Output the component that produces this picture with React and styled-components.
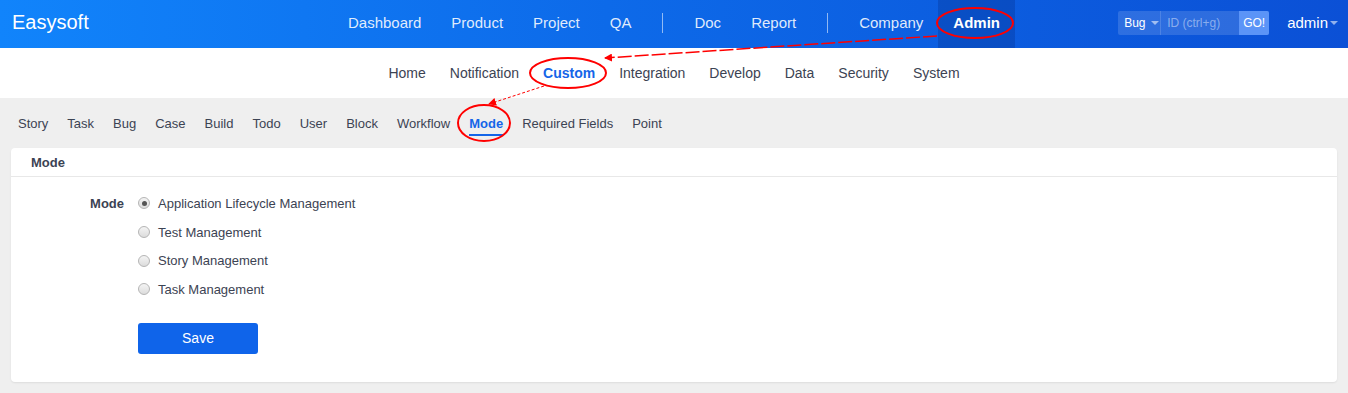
import styled, { createGlobalStyle } from 'styled-components';

const GlobalStyle = createGlobalStyle`
  html, body {
    margin: 0;
    padding: 0;
    background: #efefef;
    font-family: "Liberation Sans", Arial, sans-serif;
    color: #3c4353;
  }
  * { box-sizing: border-box; }
`;

const Page = styled.div`
  position: relative;
  width: 1348px;
  height: 393px;
  overflow: hidden;
  background: #efefef;
`;

const Header = styled.header`
  display: grid;
  grid-template-columns: 1fr auto 1fr;
  align-items: stretch;
  height: 48px;
  background: linear-gradient(90deg, #1184fb 0%, #0d6ae9 45%, #0b50d6 100%);
  color: #fff;
`;

const Logo = styled.div`
  display: flex;
  align-items: center;
  padding: 0 0 3px 12px;
  font-size: 20px;
  color: #fff;
`;

const MainNav = styled.nav`
  display: flex;
  align-items: stretch;
`;

const MainLink = styled.a`
  display: flex;
  align-items: center;
  padding: 0 15px 3px;
  font-size: 15px;
  color: ${p => (p.active ? '#fff' : 'rgba(255,255,255,0.88)')};
  font-weight: ${p => (p.active ? 'bold' : 'normal')};
  background: ${p => (p.active ? 'rgba(0,20,90,0.2)' : 'transparent')};
`;

const Divider = styled.span`
  align-self: center;
  width: 1px;
  height: 20px;
  margin: 0 16px 3px;
  background: rgba(255,255,255,0.55);
`;

const RightTools = styled.div`
  display: flex;
  align-items: center;
  justify-content: flex-end;
  padding: 0 10px 3px 0;
`;

const SearchBox = styled.div`
  display: flex;
  align-items: stretch;
  height: 24px;
  background: rgba(255,255,255,0.14);
  border-radius: 2px;
  margin-right: 18px;
`;

const SearchType = styled.div`
  display: flex;
  align-items: center;
  gap: 5px;
  width: 43px;
  padding-left: 6px;
  font-size: 12px;
  color: #fff;
  border-right: 1px solid rgba(255,255,255,0.15);
`;

const Caret = styled.span`
  display: inline-block;
  width: 0;
  height: 0;
  border-left: 4px solid transparent;
  border-right: 4px solid transparent;
  border-top: 4px solid rgba(255,255,255,0.55);
`;

const SearchInput = styled.div`
  display: flex;
  align-items: center;
  width: 78px;
  padding-left: 6px;
  font-size: 12px;
  color: rgba(255,255,255,0.45);
`;

const GoButton = styled.div`
  display: flex;
  align-items: center;
  justify-content: center;
  width: 30px;
  font-size: 12px;
  color: #fff;
  background: #5b94f7;
  border-radius: 0 2px 2px 0;
`;

const UserMenu = styled.div`
  display: flex;
  align-items: center;
  gap: 2px;
  font-size: 15px;
  color: #fff;
`;

const SubNav = styled.nav`
  display: flex;
  justify-content: center;
  align-items: center;
  height: 50px;
  background: #fff;
`;

const SubLink = styled.a`
  padding: 0 12px;
  font-size: 14px;
  color: ${p => (p.active ? '#1565e8' : '#3c4353')};
  font-weight: ${p => (p.active ? 'bold' : 'normal')};
`;

const TabBar = styled.div`
  display: flex;
  align-items: stretch;
  height: 50px;
  padding-left: 8.5px;
`;

const Tab = styled.a`
  position: relative;
  display: flex;
  align-items: center;
  padding: 0 9.5px;
  font-size: 13px;
  color: ${p => (p.active ? '#1565e8' : '#3c4353')};
  font-weight: ${p => (p.active ? 'bold' : 'normal')};
  &::after {
    content: '';
    display: ${p => (p.active ? 'block' : 'none')};
    position: absolute;
    left: 9.5px;
    right: 9.5px;
    bottom: 12px;
    height: 2px;
    background: #1565e8;
  }
`;

const Panel = styled.section`
  margin: 0 11px;
  background: #fff;
  border-radius: 4px;
  box-shadow: 0 1px 2px rgba(0,0,0,0.08);
`;

const PanelHeader = styled.div`
  display: flex;
  align-items: center;
  height: 29px;
  padding-left: 20px;
  font-size: 13px;
  font-weight: bold;
  border-bottom: 1px solid #e8e8e8;
`;

const PanelBody = styled.div`
  display: grid;
  grid-template-columns: 113px auto;
  column-gap: 14px;
  padding: 12px 0 28px;
`;

const FieldLabel = styled.div`
  height: 28.7px;
  display: flex;
  align-items: center;
  justify-content: flex-end;
  font-size: 13px;
  font-weight: bold;
`;

const Options = styled.div`
  display: flex;
  flex-direction: column;
`;

const Option = styled.label`
  display: flex;
  align-items: center;
  gap: 8px;
  height: 28.7px;
  font-size: 13px;
  color: #3c4353;
`;

const Radio = styled.span`
  position: relative;
  width: 12px;
  height: 12px;
  border-radius: 50%;
  border: 1px solid #b5b5b5;
  background: linear-gradient(180deg, #f4f4f4, #dcdcdc);
  &::after {
    content: '';
    display: ${p => (p.checked ? 'block' : 'none')};
    position: absolute;
    left: 2.5px;
    top: 2.5px;
    width: 5px;
    height: 5px;
    border-radius: 50%;
    background: #555;
  }
`;

const SaveButton = styled.button`
  margin-top: 19px;
  width: 120px;
  height: 31px;
  border: none;
  border-radius: 3px;
  background: #0f64ea;
  color: #fff;
  font-family: inherit;
  font-size: 14px;
`;

const Annotations = styled.svg`
  position: absolute;
  left: 0;
  top: 0;
  pointer-events: none;
`;

const mainNav = [
  ['Dashboard'], ['Product'], ['Project'], ['QA'], null,
  ['Doc'], ['Report'], null, ['Company'], ['Admin', true],
];
const subNav = ['Home', 'Notification', 'Custom', 'Integration', 'Develop', 'Data', 'Security', 'System'];
const tabs = ['Story', 'Task', 'Bug', 'Case', 'Build', 'Todo', 'User', 'Block', 'Workflow', 'Mode', 'Required Fields', 'Point'];
const modes = ['Application Lifecycle Management', 'Test Management', 'Story Management', 'Task Management'];

const App = () => (
  <Page>
    <GlobalStyle />
    <Header>
      <Logo>Easysoft</Logo>
      <MainNav>
        {mainNav.map((item, i) =>
          item ? (
            <MainLink key={i} active={item[1]}>{item[0]}</MainLink>
          ) : (
            <Divider key={i} />
          )
        )}
      </MainNav>
      <RightTools>
        <SearchBox>
          <SearchType>Bug <Caret /></SearchType>
          <SearchInput>ID (ctrl+g)</SearchInput>
          <GoButton>GO!</GoButton>
        </SearchBox>
        <UserMenu>admin <Caret /></UserMenu>
      </RightTools>
    </Header>
    <SubNav>
      {subNav.map(s => (
        <SubLink key={s} active={s === 'Custom'}>{s}</SubLink>
      ))}
    </SubNav>
    <TabBar>
      {tabs.map(t => (
        <Tab key={t} active={t === 'Mode'}>{t}</Tab>
      ))}
    </TabBar>
    <Panel>
      <PanelHeader>Mode</PanelHeader>
      <PanelBody>
        <FieldLabel>Mode</FieldLabel>
        <Options>
          {modes.map((m, i) => (
            <Option key={m}>
              <Radio checked={i === 0} />
              {m}
            </Option>
          ))}
          <SaveButton>Save</SaveButton>
        </Options>
      </PanelBody>
    </Panel>
    <Annotations width="1348" height="393" viewBox="0 0 1348 393">
      <defs>
        <marker id="arr" markerWidth="8" markerHeight="8" refX="7" refY="4" orient="auto" markerUnits="userSpaceOnUse">
          <path d="M0,0 L8,4 L0,8 z" fill="#f00" />
        </marker>
      </defs>
      <ellipse cx="975" cy="23" rx="38" ry="15" fill="none" stroke="#f00" strokeWidth="2" />
      <ellipse cx="568" cy="73" rx="38" ry="15" fill="none" stroke="#f00" strokeWidth="2" />
      <ellipse cx="484" cy="123" rx="26" ry="18" fill="none" stroke="#f00" strokeWidth="2" />
      <line x1="937" y1="36" x2="605" y2="58" stroke="#f00" strokeWidth="1.5" strokeDasharray="14 3" markerEnd="url(#arr)" />
      <line x1="544" y1="86" x2="489" y2="104" stroke="#f00" strokeWidth="1" strokeDasharray="3 2" markerEnd="url(#arr)" />
    </Annotations>
  </Page>
);

export default App;
